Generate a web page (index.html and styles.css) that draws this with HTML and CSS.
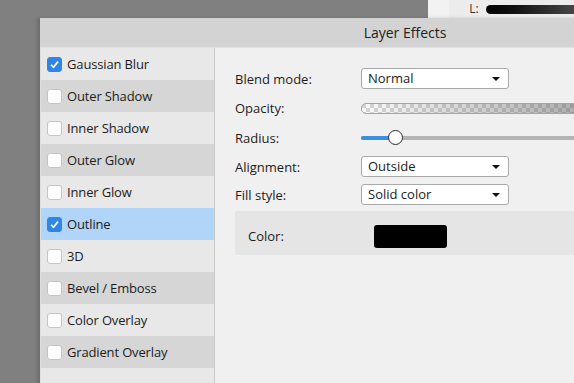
FILE: index.html
```html
<!DOCTYPE html>
<html lang="en">
<head>
    <meta charset="UTF-8">
    <meta name="viewport" content="width=device-width, initial-scale=1.0">
    <title>Layer Effects</title>
    <link rel="stylesheet" href="styles.css">
</head>
<body>
    <div class="desktop">
        <div class="color-panel">
            <div class="color-panel-gap"></div>
            <span class="channel-label">L:</span>
            <span class="lightness-bar"></span>
        </div>

        <div class="dialog">
            <div class="titlebar">Layer Effects</div>
            <div class="dialog-body">
                <ul class="effects">
                    <li class="effect"><span class="check on"><svg viewBox="0 0 15 15"><path d="M3.5 7.8 L6.3 10.6 L11.6 4.2"/></svg></span>Gaussian Blur</li>
                    <li class="effect alt"><span class="check"></span>Outer Shadow</li>
                    <li class="effect"><span class="check"></span>Inner Shadow</li>
                    <li class="effect alt"><span class="check"></span>Outer Glow</li>
                    <li class="effect"><span class="check"></span>Inner Glow</li>
                    <li class="effect selected"><span class="check on"><svg viewBox="0 0 15 15"><path d="M3.5 7.8 L6.3 10.6 L11.6 4.2"/></svg></span>Outline</li>
                    <li class="effect"><span class="check"></span>3D</li>
                    <li class="effect alt"><span class="check"></span>Bevel / Emboss</li>
                    <li class="effect"><span class="check"></span>Color Overlay</li>
                    <li class="effect alt"><span class="check"></span>Gradient Overlay</li>
                    <li class="effect"></li>
                </ul>

                <div class="settings">
                    <div class="field row-blend">
                        <label>Blend mode:</label>
                        <div class="select">Normal<span class="caret"></span></div>
                    </div>
                    <div class="field row-opacity">
                        <label>Opacity:</label>
                        <div class="opacity-slider"></div>
                    </div>
                    <div class="field row-radius">
                        <label>Radius:</label>
                        <div class="range">
                            <div class="range-fill"></div>
                            <div class="range-thumb"></div>
                        </div>
                    </div>
                    <div class="field row-align">
                        <label>Alignment:</label>
                        <div class="select">Outside<span class="caret"></span></div>
                    </div>
                    <div class="field row-fill">
                        <label>Fill style:</label>
                        <div class="select">Solid color<span class="caret"></span></div>
                    </div>
                    <div class="group">
                        <label>Color:</label>
                        <div class="color-swatch"></div>
                    </div>
                </div>
            </div>
        </div>
    </div>
</body>
</html>
```

FILE: styles.css
```css
body {
    margin: 0;
    background-color: #808080;
    font-family: "Segoe UI", "Open Sans", sans-serif;
    font-size: 13px;
    color: #1c1c1c;
    overflow: hidden;
}

.desktop {
    position: relative;
    width: 574px;
    height: 383px;
    overflow: hidden;
}

/* bit of the colour panel peeking out behind the dialog */
.color-panel {
    position: absolute;
    left: 428px;
    top: 0;
    width: 200px;
    height: 18px;
    background-color: #ececec;
    display: flex;
    align-items: center;
}

.color-panel-gap {
    width: 24px;
    height: 100%;
    background-color: #f2f2f2;
}

.channel-label {
    margin-left: 20px;
    font-size: 12px;
    color: #333;
    line-height: 18px;
}

.lightness-bar {
    margin-left: 7px;
    width: 160px;
    height: 9px;
    border-radius: 5px;
    background: linear-gradient(to right, #000 0%, #111 20%, #777 100%);
}

.dialog {
    position: absolute;
    left: 40px;
    top: 18px;
    width: 730px;
    height: 420px;
    background-color: #f0f0f0;
    box-shadow: -3px 0 3px rgba(0,0,0,0.15);
}

.titlebar {
    height: 29px;
    line-height: 29px;
    background-color: #d3d3d3;
    border-bottom: 1px solid #e0e0e0;
    text-align: center;
    font-size: 14px;
    color: #222;
}

.dialog-body {
    display: flex;
}

.effects {
    list-style: none;
    margin: 0;
    padding: 0;
    width: 173px;
    border-left: 1px solid #dedede;
    border-right: 1px solid #c9c9c9;
    background-color: #e8e8e8;
}

.effect {
    height: 32px;
    display: flex;
    align-items: center;
    padding-left: 6px;
    gap: 5px;
    letter-spacing: -0.15px;
}

.effect.alt {
    background-color: #d6d6d6;
}

.effect.selected {
    background-color: #b1d5f9;
}

.check {
    width: 13px;
    height: 13px;
    border: 1px solid #c4c4c4;
    border-radius: 3px;
    background-color: #fff;
    display: flex;
}

.check.on {
    background-color: #2f86e4;
    border-color: #2f86e4;
}

.check svg {
    width: 13px;
    height: 13px;
    fill: none;
    stroke: #fff;
    stroke-width: 2;
}

.settings {
    flex: 1;
    padding: 16px 20px 0 20px;
}

.field {
    display: grid;
    grid-template-columns: 126px 1fr;
    align-items: center;
    height: 29px;
}

.row-opacity {
    height: 30px;
}

.row-fill {
    height: 27px;
}

.select {
    position: relative;
    width: 140px;
    height: 19px;
    line-height: 19px;
    padding-left: 6px;
    background-color: #fff;
    border: 1px solid #a9a9a9;
    border-radius: 3px;
}

.caret {
    position: absolute;
    right: 8px;
    top: 8px;
    border-left: 4px solid transparent;
    border-right: 4px solid transparent;
    border-top: 4px solid #111;
}

.opacity-slider {
    height: 9px;
    border: 1px solid #a5a5a5;
    border-radius: 5px;
    background:
        linear-gradient(to right, rgba(90,90,90,0) 0%, rgba(90,90,90,0.85) 100%),
        repeating-conic-gradient(#fafafa 0% 25%, #d4d4d4 0% 50%) 0 0 / 8px 8px;
}

.range {
    position: relative;
    height: 4px;
    border-radius: 2px;
    background-color: #b4b4b4;
}

.range-fill {
    width: 35px;
    height: 4px;
    border-radius: 2px;
    background-color: #3c8ee6;
}

.range-thumb {
    position: absolute;
    left: 27px;
    top: -6px;
    width: 13px;
    height: 13px;
    border-radius: 50%;
    background-color: #fff;
    border: 1.5px solid #2a2a2a;
}

.group {
    margin-top: 3px;
    height: 38px;
    padding: 6px 0 0 13px;
    display: grid;
    grid-template-columns: 126px 1fr;
    align-items: center;
    background-color: #e5e5e5;
}

.color-swatch {
    width: 73px;
    height: 23px;
    background-color: #000;
    border-radius: 3px;
}
```
